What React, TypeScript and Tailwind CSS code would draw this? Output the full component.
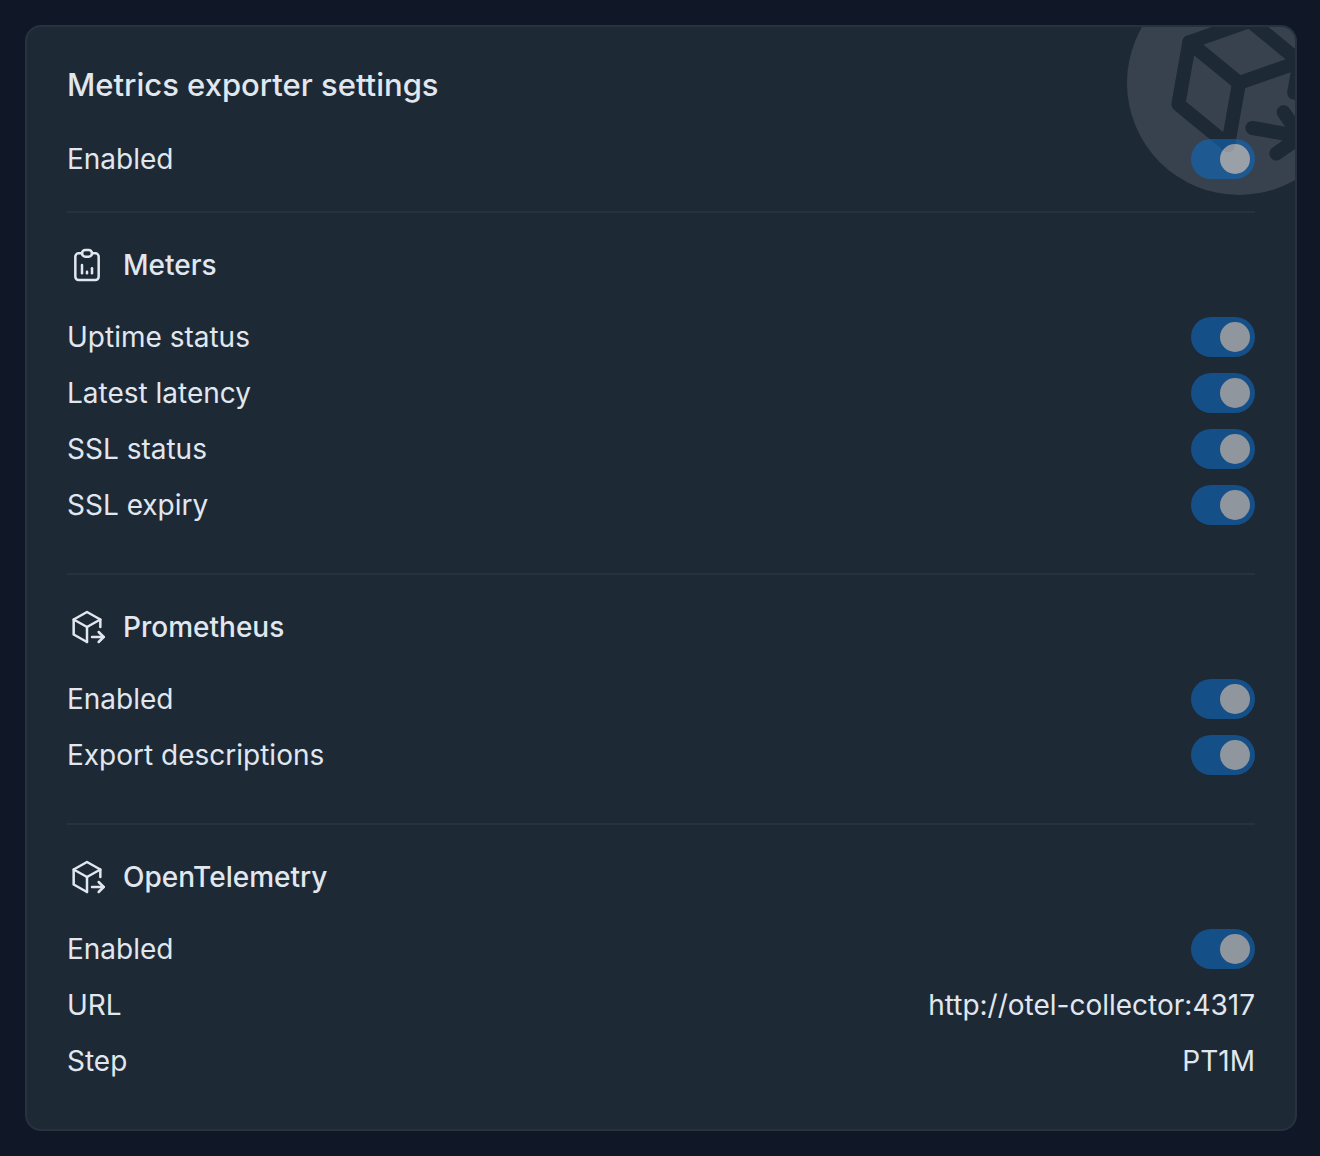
import { useId, type ReactNode } from 'react';

function PackageExportIcon({ className, strokeWidth }: { className: string; strokeWidth: number }) {
  return (
    <svg
      viewBox="0 0 24 24"
      fill="none"
      stroke="currentColor"
      strokeWidth={strokeWidth}
      strokeLinecap="round"
      strokeLinejoin="round"
      aria-hidden="true"
      className={className}
    >
      <path d="M12 21l-8 -4.5v-9l8 -4.5l8 4.5v4.5" />
      <path d="M12 12l8 -4.5" />
      <path d="M12 12v9" />
      <path d="M12 12l-8 -4.5" />
      <path d="M15 18h7" />
      <path d="M19 15l3 3l-3 3" />
    </svg>
  );
}

function ReportIcon() {
  return (
    <svg
      viewBox="0 0 24 24"
      fill="none"
      stroke="currentColor"
      strokeWidth={1.5}
      strokeLinecap="round"
      strokeLinejoin="round"
      aria-hidden="true"
      className="size-10"
    >
      <path d="M9 5h-2a2 2 0 0 0 -2 2v12a2 2 0 0 0 2 2h10a2 2 0 0 0 2 -2v-12a2 2 0 0 0 -2 -2h-2" />
      <path d="M9 5a2 2 0 0 1 2 -2h2a2 2 0 0 1 2 2a2 2 0 0 1 -2 2h-2a2 2 0 0 1 -2 -2z" />
      <path d="M9 17v-5" />
      <path d="M12 17v-1" />
      <path d="M15 17v-3" />
    </svg>
  );
}

function SwitchRow({ label }: { label: string }) {
  const id = useId();
  return (
    <div className="flex h-10 items-center justify-between">
      <label htmlFor={id}>{label}</label>
      <input
        id={id}
        type="checkbox"
        role="switch"
        defaultChecked
        disabled
        className="relative h-10 w-16 appearance-none rounded-full bg-slate-600 opacity-60 before:absolute before:top-[5px] before:left-[5px] before:size-[30px] before:rounded-full before:bg-[#dcdfe3] checked:bg-[#0f69bd] checked:before:left-[29px]"
      />
    </div>
  );
}

function ValueRow({ label, value }: { label: string; value: string }) {
  return (
    <div className="flex h-10 items-center justify-between">
      <dt>{label}</dt>
      <dd>{value}</dd>
    </div>
  );
}

function Section({ title, icon, children }: { title: string; icon: ReactNode; children: ReactNode }) {
  return (
    <section className="mb-12 border-t-2 border-[#26323e] pt-8 last:mb-0">
      <h2 className="mb-8 flex h-10 items-center gap-4 font-medium">
        {icon}
        {title}
      </h2>
      <div className="flex flex-col gap-4">{children}</div>
    </section>
  );
}

export default function App() {
  return (
    <main className="min-h-screen bg-[#101726] py-[25px] pr-[23px] pl-[25px] font-['Inter',sans-serif] text-[28px] leading-10 text-[#e1e7ef]">
      <div className="relative overflow-hidden rounded-2xl border-2 border-[#26333f] bg-[#1e2936] px-10 pt-10 pb-12">
        <div className="absolute -top-14 -right-14 flex size-56 items-center justify-center rounded-full bg-[#38424f] text-[#1e2936]">
          <PackageExportIcon className="size-42 rotate-10" strokeWidth={2} />
        </div>
        <div className="relative">
          <h1 className="mb-9 text-[31px] leading-9 font-medium">Metrics exporter settings</h1>
          <div className="mb-8">
            <SwitchRow label="Enabled" />
          </div>
          <Section title="Meters" icon={<ReportIcon />}>
            <SwitchRow label="Uptime status" />
            <SwitchRow label="Latest latency" />
            <SwitchRow label="SSL status" />
            <SwitchRow label="SSL expiry" />
          </Section>
          <Section title="Prometheus" icon={<PackageExportIcon className="size-10" strokeWidth={1.5} />}>
            <SwitchRow label="Enabled" />
            <SwitchRow label="Export descriptions" />
          </Section>
          <Section title="OpenTelemetry" icon={<PackageExportIcon className="size-10" strokeWidth={1.5} />}>
            <SwitchRow label="Enabled" />
            <dl className="flex flex-col gap-4">
              <ValueRow label="URL" value="http://otel-collector:4317" />
              <ValueRow label="Step" value="PT1M" />
            </dl>
          </Section>
        </div>
      </div>
    </main>
  );
}
